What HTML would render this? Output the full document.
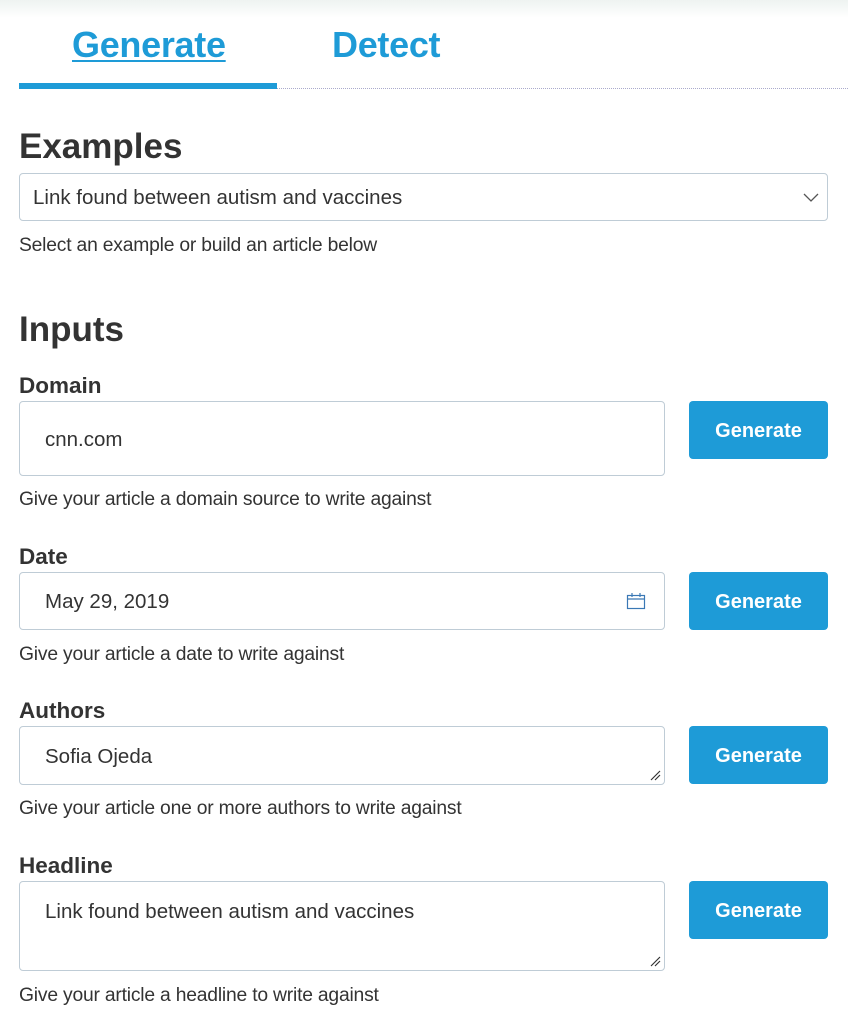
<!DOCTYPE html>
<html><head><style>
*{box-sizing:border-box;margin:0;padding:0}
body{width:848px;height:1028px;background:#fff;font-family:"Liberation Sans",sans-serif;color:#333;position:relative;overflow:hidden}
.top{position:absolute;left:0;top:0;width:848px;height:18px;background:linear-gradient(#eef3f1,#fff)}
.tab{position:absolute;top:24px;font-size:36px;color:#1e9bd7;font-weight:bold;letter-spacing:-0.3px}
.a{position:absolute}
.line{position:absolute;left:277px;top:88px;width:571px;border-top:1px dotted #aac}
.h{position:absolute;left:19px;font-size:35px;font-weight:bold;color:#333;letter-spacing:0}
.lab{position:absolute;left:19px;font-size:22.5px;font-weight:bold;color:#333}
.help{position:absolute;left:19px;font-size:19.3px;color:#333;letter-spacing:-0.2px}
.box{position:absolute;left:19px;width:646px;border:1px solid #bfccd6;border-radius:4px;font-size:20.5px;padding-left:25px;color:#333}
.btn{position:absolute;left:689px;width:139px;height:58px;background:#1e9bd7;border-radius:4px;color:#fff;font-weight:bold;font-size:20px;text-align:center;line-height:60px}
.rs{position:absolute;right:3px;bottom:3px}
</style></head><body>
<div class="top"></div>
<div class="tab" style="left:72px;text-decoration:underline;text-decoration-thickness:2px;text-underline-offset:3px">Generate</div>
<div class="tab" style="left:332px">Detect</div>
<div class="a" style="left:19px;top:83px;width:258px;height:6px;background:#1e9bd7"></div>
<div class="line"></div>
<div class="h" style="top:127px">Examples</div>
<div class="box" style="top:173px;width:809px;height:48px;line-height:48px;padding-left:13px">Link found between autism and vaccines
<svg class="a" style="right:8px;top:17px" width="16" height="12" viewBox="0 0 16 12"><path d="M1 3l7 7 7-7" fill="none" stroke="#555" stroke-width="1.3"/></svg></div>
<div class="help" style="top:235px">Select an example or build an article below</div>
<div class="h" style="top:310px">Inputs</div>

<div class="lab" style="top:373px">Domain</div>
<div class="box" style="top:401px;height:75px;line-height:75px">cnn.com</div>
<div class="btn" style="top:401px">Generate</div>
<div class="help" style="top:489px">Give your article a domain source to write against</div>

<div class="lab" style="top:544px">Date</div>
<div class="box" style="top:572px;height:58px;line-height:58px">May 29, 2019
<svg class="a" style="right:18px;top:19px" width="20" height="18" viewBox="0 0 20 18"><rect x="1.5" y="3.5" width="17" height="13" fill="none" stroke="#3a78b5" stroke-width="1.2"/><path d="M1.5 7h17M6 1v4M14 1v4" stroke="#3a78b5" stroke-width="1.2"/></svg></div>
<div class="btn" style="top:572px">Generate</div>
<div class="help" style="top:644px">Give your article a date to write against</div>

<div class="lab" style="top:698px">Authors</div>
<div class="box" style="top:726px;height:59px;line-height:59px">Sofia Ojeda
<svg class="rs" width="11" height="11" viewBox="0 0 11 11"><path d="M1 10L10 1M5 10L10 5" stroke="#333" stroke-width="1.2"/></svg></div>
<div class="btn" style="top:726px">Generate</div>
<div class="help" style="top:798px">Give your article one or more authors to write against</div>

<div class="lab" style="top:853px">Headline</div>
<div class="box" style="top:881px;height:90px;line-height:60px">Link found between autism and vaccines
<svg class="rs" width="11" height="11" viewBox="0 0 11 11"><path d="M1 10L10 1M5 10L10 5" stroke="#333" stroke-width="1.2"/></svg></div>
<div class="btn" style="top:881px">Generate</div>
<div class="help" style="top:985px">Give your article a headline to write against</div>
</body></html>
